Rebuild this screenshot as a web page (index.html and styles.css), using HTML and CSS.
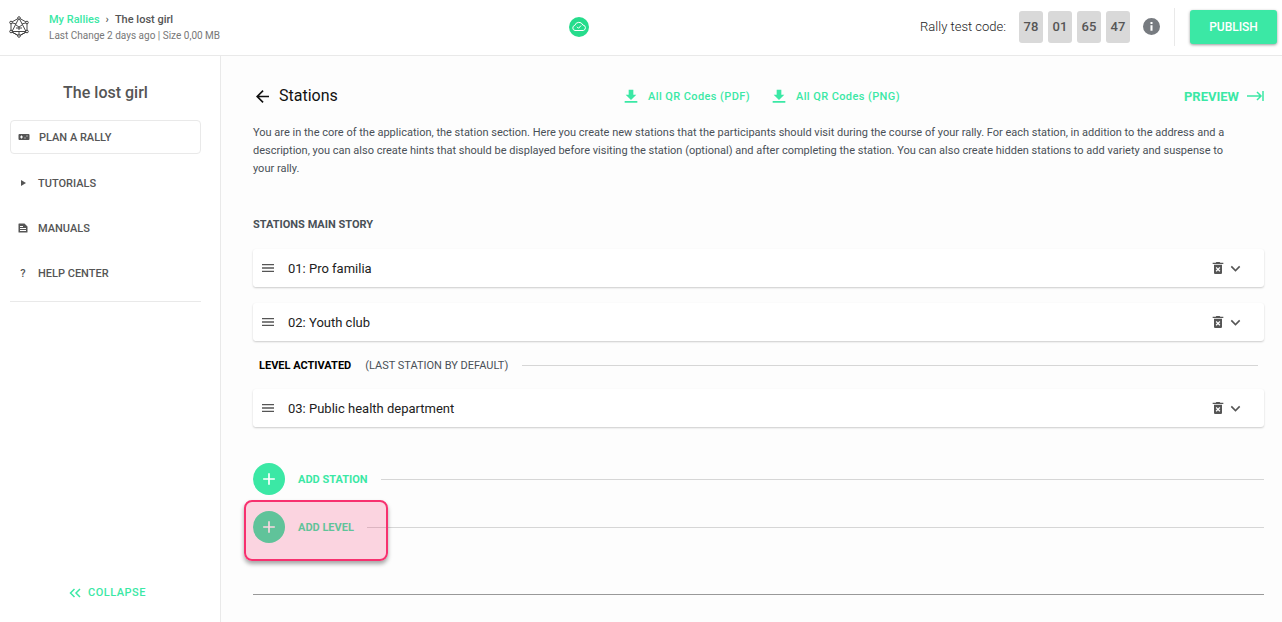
FILE: index.html
```
<!DOCTYPE html>
<html lang="en">
<head>
<meta charset="utf-8">
<meta name="viewport" content="width=device-width, initial-scale=1">
<title>The lost girl - Stations</title>
<link rel="stylesheet" href="styles.css">
</head>
<body>

<!-- shared icons -->
<svg class="sprite" aria-hidden="true">
  <symbol id="download" viewBox="0 0 24 24"><path d="M20 10h-4.500V2.500h-7V10H4l8 8 8-8zM2.500 19.500v2.500h19v-2.500z"/></symbol>
  <symbol id="drag" viewBox="0 0 12 8"><path d="M0 0h12v1H0zM0 7h12v1H0z"/><path opacity=".75" d="M0 3h12v2H0z"/><path opacity=".25" d="M0 1h12v1H0zM0 6h12v1H0z"/></symbol>
  <symbol id="trash" viewBox="0 0 24 24"><path d="M6 19c0 1.100.9 2 2 2h8c1.100 0 2-.9 2-2V7H6v12zm2.500-7.100l1.400-1.400L12 12.600l2.100-2.100 1.400 1.400L13.400 14l2.100 2.100-1.400 1.400L12 15.400l-2.100 2.100-1.400-1.400L10.600 14zM15.500 4l-1-1h-5l-1 1H4v2h16V4z"/></symbol>
  <symbol id="chevron" viewBox="0 0 24 24"><path d="M7.400 8.600L12 13.200l4.600-4.600L18 10l-6 6-6-6z"/></symbol>
  <symbol id="plus" viewBox="0 0 24 24"><path d="M19 13h-6v6h-2v-6H5v-2h6V5h2v6h6z"/></symbol>
</svg>

<header class="topbar">
  <a class="logo" href="#" aria-label="Home">
    <svg viewBox="0 0 20 22" width="20" height="22">
      <path d="M10 2L18 6.500V15.500L10 20L2 15.500V6.500ZM10 2L3 15.500H17ZM2 6.500L7 8M18 6.500L13 8M7 9L10 11L13 9M10 11V14M7 12H13M2 15.500L10 20L18 15.500M10 15.500V20"/>
      <g class="logo-dots">
        <circle cx="10" cy="2" r="1.300"/><circle cx="18" cy="6.500" r="1.300"/><circle cx="18" cy="15.500" r="1.300"/>
        <circle cx="10" cy="20" r="1.300"/><circle cx="2" cy="15.500" r="1.300"/><circle cx="2" cy="6.500" r="1.300"/>
      </g>
    </svg>
  </a>
  <div class="crumbs">
    <nav class="path"><a href="#">My Rallies</a><span class="sep">›</span><span>The lost girl</span></nav>
    <div class="meta">Last Change 2 days ago | Size 0,00 MB</div>
  </div>
  <div class="saved">
    <svg viewBox="0 0 20 20" width="20" height="20">
      <circle cx="10" cy="10" r="10"/>
      <path d="M6 13.500a2.600 2.600 0 0 1-.2-5.100A4.300 4.300 0 0 1 13.900 8a2.800 2.800 0 0 1 .4 5.500ZM8 9.800l1.500 1.500 2.600-2.800"/>
    </svg>
  </div>
  <div class="tools">
    <span class="code-label">Rally test code:</span>
    <div class="code"><span>78</span><span>01</span><span>65</span><span>47</span></div>
    <button class="info" type="button" aria-label="Info">
      <svg viewBox="2 2 20 20" width="17" height="17"><path d="M12 2a10 10 0 1 0 0 20 10 10 0 0 0 0-20zm1.200 15h-2.400v-6.500h2.400zm0-8h-2.400V6.700h2.400z"/></svg>
    </button>
    <div class="publish-wrap"><button class="publish" type="button">PUBLISH</button></div>
  </div>
</header>

<div class="layout">
  <aside class="sidebar">
    <h2>The lost girl</h2>
    <nav class="menu">
      <a class="active" href="#">
        <svg viewBox="0 0 12 12" width="12" height="12"><path fill-rule="evenodd" d="M1.500 3h9q1 0 1 1v4q0 1-1 1h-9q-1 0-1-1V4q0-1 1-1zm1.500 1.500v1H2v1h1v1h1v-1h1v-1H4v-1zm3.500 2v1h1v-1zm2-2v1h1v-1z"/></svg>PLAN A RALLY</a>
      <a href="#"><svg viewBox="0 0 12 12" width="12" height="12"><path d="M4 3l5 3-5 3z"/></svg>TUTORIALS</a>
      <a href="#"><svg viewBox="0 0 12 12" width="12" height="12"><path fill-rule="evenodd" d="M2 1.500h5.500l3 3V10q0 .5-.5.500H2q-.5 0-.5-.5V2q0-.5.5-.5zM3 4v1h3V4zm0 2v1h6V6zm0 2v1h6V8z"/></svg>MANUALS</a>
      <a href="#"><span class="qmark">?</span>HELP CENTER</a>
    </nav>
    <button class="collapse" type="button">
      <svg viewBox="0 0 12 10" width="12" height="10"><path d="M5.500 1L1.500 5l4 4M11 1L7 5l4 4"/></svg>COLLAPSE</button>
  </aside>

  <main class="content">
    <div class="title-row">
      <h1><a href="#" aria-label="Back"><svg viewBox="4 4 16 16" width="13" height="13"><path d="M20 11H7.800l5.600-5.600L12 4l-8 8 8 8 1.400-1.400L7.800 13H20z"/></svg></a>Stations</h1>
      <div class="downloads">
        <a href="#"><svg width="16" height="16"><use href="#download"/></svg>All QR Codes (PDF)</a>
        <a href="#"><svg width="16" height="16"><use href="#download"/></svg>All QR Codes (PNG)</a>
      </div>
      <a class="preview" href="#">PREVIEW<svg viewBox="0 0 18 10" width="18" height="10"><path d="M1 5h14M11 1l4 4-4 4M17 0v10"/></svg></a>
    </div>

    <p class="intro">You are in the core of the application, the station section. Here you create new stations that the participants should visit during the course of your rally. For each station, in addition to the address and a description, you can also create hints that should be displayed before visiting the station (optional) and after completing the station. You can also create hidden stations to add variety and suspense to your rally.</p>

    <h3>STATIONS MAIN STORY</h3>

    <div class="stations">
      <div class="station">
        <svg class="drag" width="12" height="8"><use href="#drag"/></svg>
        <span class="name">01: Pro familia</span>
        <button type="button" aria-label="Delete"><svg width="16" height="16"><use href="#trash"/></svg></button>
        <button type="button" aria-label="Expand"><svg width="19" height="19"><use href="#chevron"/></svg></button>
      </div>
      <div class="station">
        <svg class="drag" width="12" height="8"><use href="#drag"/></svg>
        <span class="name">02: Youth club</span>
        <button type="button" aria-label="Delete"><svg width="16" height="16"><use href="#trash"/></svg></button>
        <button type="button" aria-label="Expand"><svg width="19" height="19"><use href="#chevron"/></svg></button>
      </div>
      <div class="level"><strong>LEVEL ACTIVATED</strong><span>(LAST STATION BY DEFAULT)</span></div>
      <div class="station">
        <svg class="drag" width="12" height="8"><use href="#drag"/></svg>
        <span class="name">03: Public health department</span>
        <button type="button" aria-label="Delete"><svg width="16" height="16"><use href="#trash"/></svg></button>
        <button type="button" aria-label="Expand"><svg width="19" height="19"><use href="#chevron"/></svg></button>
      </div>
    </div>

    <div class="add-row">
      <button class="add" type="button"><span class="circle"><svg width="20" height="20"><use href="#plus"/></svg></span>ADD STATION</button>
    </div>
    <div class="add-row">
      <button class="add" type="button"><span class="circle"><svg width="20" height="20"><use href="#plus"/></svg></span>ADD LEVEL</button>
      <div class="highlight"></div>
    </div>

    <hr>
  </main>
</div>

</body>
</html>
```
FILE: styles.css
```
* {
    box-sizing: border-box;
}
body {
    margin: 0;
    min-height: 100vh;
    display: flex;
    flex-direction: column;
    font-family: Roboto, Arial, sans-serif;
    font-size: 11px;
    color: #495057;
    background-color: #fff;
}
a {
    color: #3be8a5;
    text-decoration: none;
}
button {
    font-family: inherit;
    padding: 0;
    border: 0;
    color: inherit;
    background: none;
    cursor: pointer;
}
svg {
    display: block;
    flex: none;
    fill: currentColor;
}
.sprite {
    position: absolute;
    width: 0;
    height: 0;
}

/* top bar */
.topbar {
    display: flex;
    align-items: center;
    height: 56px;
    padding: 0 5px 2px 9px;
    border-bottom: 1px solid #e9e9e9;
}
.logo {
    margin-right: 20px;
    color: #333;
}
.logo svg {
    fill: none;
    stroke: currentColor;
    stroke-width: 0.9;
}
.logo .logo-dots {
    fill: #fff;
}
.crumbs {
    padding-top: 2px;
}
.path {
    font-weight: 500;
    line-height: 16px;
    color: #555;
}
.sep {
    margin: 0 6px;
}
.meta {
    font-size: 10px;
    line-height: 16px;
    color: #777;
}
.saved {
    margin: 0 auto;
    padding-left: 18px;
}
.saved svg {
    fill: #26dc8c;
}
.saved path {
    fill: none;
    stroke: #fff;
}
.tools {
    display: flex;
    align-items: center;
}
.code-label {
    font-size: 13px;
    font-weight: 300;
    color: #222;
    margin-right: 13px;
}
.code {
    display: flex;
    gap: 5px;
}
.code span {
    width: 24px;
    line-height: 32px;
    border-radius: 3px;
    text-align: center;
    font-size: 13px;
    font-weight: 500;
    color: #555;
    background-color: #d9d9d9;
}
.info {
    margin: 0 14px 0 13px;
    color: #777b80;
}
.publish-wrap {
    padding: 2px 0 2px 15px;
    border-left: 1px solid #e9e9e9;
}
.publish {
    display: block;
    width: 87px;
    height: 34px;
    border-radius: 3px;
    font-size: 12px;
    font-weight: 500;
    color: #fff;
    background-color: #3be8a5;
    box-shadow: 0 1px 3px rgba(0, 0, 0, 0.4);
}

/* sidebar */
.layout {
    display: flex;
    flex: 1;
}
.sidebar {
    display: flex;
    flex-direction: column;
    flex: 0 0 221px;
    padding: 27px 19px 20px 10px;
    border-right: 1px solid #e9e9e9;
}
.sidebar h2 {
    margin: 0 0 17px;
    font-size: 16px;
    font-weight: 500;
    line-height: 20px;
    text-align: center;
    color: #555;
}
.menu {
    display: flex;
    flex-direction: column;
    gap: 11px;
    padding-bottom: 11px;
    border-bottom: 1px solid #e9e9e9;
}
.menu a {
    display: flex;
    align-items: center;
    gap: 9px;
    height: 34px;
    padding: 0 6px;
    border: 1px solid transparent;
    border-radius: 4px;
    font-weight: 500;
    color: #555;
}
.menu .active {
    margin-bottom: 1px;
    padding: 0 7px;
    border-color: #e9e9e9;
}
.qmark {
    width: 12px;
    text-align: center;
}
.collapse {
    display: flex;
    align-items: center;
    align-self: center;
    gap: 7px;
    margin-top: auto;
    padding-left: 4px;
    font-size: 11px;
    font-weight: 500;
    line-height: 18px;
    letter-spacing: 0.5px;
    color: #3be8a5;
}
.collapse svg,
.preview svg {
    fill: none;
    stroke: currentColor;
    stroke-width: 1.5;
}

/* content */
.content {
    flex: 1;
    padding: 28px 18px 16px 32px;
    background-color: #fdfdfd;
}
.title-row {
    display: grid;
    grid-template-columns: 1fr auto 1fr;
    align-items: center;
    height: 24px;
}
h1 {
    display: flex;
    align-items: center;
    gap: 10px;
    margin: 0;
    padding-left: 3px;
    font-size: 16px;
    font-weight: 400;
    line-height: 22px;
    color: #111;
}
h1 a {
    color: #111;
}
.downloads {
    display: flex;
    gap: 21px;
    padding-left: 6px;
}
.downloads a {
    display: flex;
    align-items: center;
    gap: 9px;
    font-weight: 500;
    letter-spacing: 0.4px;
}
.preview {
    display: flex;
    align-items: center;
    justify-content: flex-end;
    gap: 7px;
    font-size: 13px;
    font-weight: 700;
}
.intro {
    margin: 16px 0 38px;
    padding-right: 20px;
    line-height: 18px;
}
h3 {
    margin: 0 0 15px;
    font-size: 11px;
    font-weight: 700;
    line-height: 18px;
}
.station {
    display: flex;
    align-items: center;
    height: 38px;
    padding: 0 19px 0 9px;
    border-radius: 3px;
    color: #555;
    background-color: #fff;
    box-shadow: 0 1px 2px rgba(0, 0, 0, 0.2);
}
.station + .station {
    margin-top: 16px;
}
.station .name {
    flex: 1;
    margin-left: 14px;
    font-size: 13px;
    color: #212121;
}
.level {
    display: flex;
    align-items: center;
    gap: 14px;
    height: 48px;
    padding: 0 6px;
}
.level strong {
    color: #000;
}
.level::after,
.add-row::after {
    content: "";
    flex: 1;
    height: 1px;
    background-color: #d6d6d6;
}
.stations {
    margin-bottom: 36px;
}
.add-row {
    position: relative;
    display: flex;
    align-items: center;
    gap: 13px;
    margin-bottom: 16px;
}
.add {
    display: flex;
    align-items: center;
    gap: 13px;
    font-size: 11px;
    font-weight: 700;
    color: #3be8a5;
}
.circle {
    display: grid;
    place-items: center;
    width: 32px;
    height: 32px;
    border-radius: 50%;
    color: #fff;
    background-color: #3be8a5;
}
/* marks the next step of the tour */
.highlight {
    position: absolute;
    top: -11px;
    left: -9px;
    width: 144px;
    height: 61px;
    border: 2px solid #f7316f;
    border-radius: 8px;
    background-color: rgba(247, 49, 111, 0.2);
    box-shadow: 0 3px 4px rgba(0, 0, 0, 0.35);
    pointer-events: none;
}
hr {
    margin: 51px 0 0;
    border: 0;
    border-top: 1px solid #999;
}
```
